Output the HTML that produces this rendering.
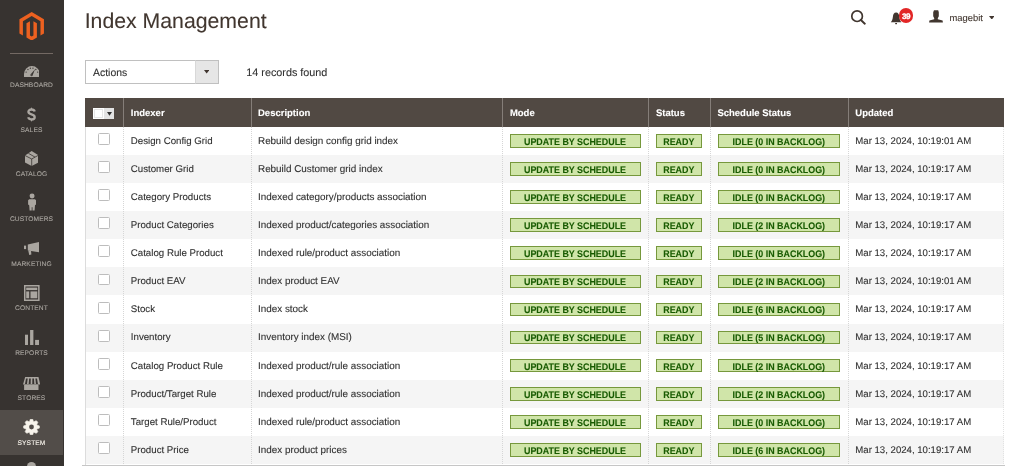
<!DOCTYPE html><html><head><meta charset="utf-8"><style>
*{margin:0;padding:0;box-sizing:border-box}
html,body{width:1024px;height:466px;overflow:hidden;background:#fff;font-family:"Liberation Sans",sans-serif}
body{will-change:transform;-webkit-text-stroke:0.1px;text-rendering:geometricPrecision}
.a{position:absolute}
.side{left:0;top:0;width:63.6px;height:466px;background:#373330}
.nl{position:absolute;left:0;width:63px;text-align:center;color:#aaa6a0;font-size:6.65px;line-height:8px;letter-spacing:0.1px;white-space:nowrap}
.ttl{left:84.7px;top:6.9px;font-size:21.25px;line-height:28px;color:#41362f;white-space:nowrap}
.tb{font-size:10.4px;line-height:14px;color:#303030;white-space:nowrap}
.th{position:absolute;top:98.4px;height:28.2px;background:#514943;color:#fff;font-weight:bold;font-size:9.5px;line-height:28.2px;white-space:nowrap;padding-left:7px;padding-top:1.2px}
.td{position:absolute;color:#303030;font-size:9.6px;white-space:nowrap;padding-left:7px;padding-top:1.2px}
.bd{position:absolute;height:13.6px;background:#d0e5a9;border:1px solid #76983c;color:#185b00;font-weight:bold;font-size:9.6px;line-height:11.6px;padding-top:1.7px;text-align:center;white-space:nowrap}
.bd span{display:inline-block;transform:scaleX(0.928);transform-origin:center}
</style></head><body>
<div class="a side">
<svg class="a" style="left:19px;top:11.8px" width="25.4" height="28.6" viewBox="0 0 24 28"><path fill="#ec6120" d="M12 0L0 7v14l3.4 2V9l8.6-5 8.6 5v14l3.4-2V7z"/><path fill="#ec6120" d="M13.7 23.1L12 24.1l-1.7-1V9L6.9 11v14L12 28l5.1-3V11l-3.4-2z"/></svg>
<div class="a" style="left:10px;top:53px;width:43px;height:1px;background:#736963"></div>
<div class="nl" style="top:81.9px;color:#aaa6a0">DASHBOARD</div>
<div class="nl" style="top:126.6px;color:#aaa6a0">SALES</div>
<div class="nl" style="top:171.3px;color:#aaa6a0">CATALOG</div>
<div class="nl" style="top:216px;color:#aaa6a0">CUSTOMERS</div>
<div class="nl" style="top:260.7px;color:#aaa6a0">MARKETING</div>
<div class="nl" style="top:305.4px;color:#aaa6a0">CONTENT</div>
<div class="nl" style="top:350.1px;color:#aaa6a0">REPORTS</div>
<div class="nl" style="top:394.8px;color:#aaa6a0">STORES</div>
<div class="a" style="left:0;top:409.9px;width:63px;height:44.8px;background:#524d49"></div>
<div class="nl" style="top:439.5px;color:#f7f3eb">SYSTEM</div>
<svg class="a" style="left:23.7px;top:65.7px" width="15.8" height="11.2" viewBox="0 0 16 11.2"><path fill="#aaa6a0" d="M0 11.2V8A8 8 0 0 1 16 8V11.2Z"/><circle cx="2.17" cy="6.08" r="0.7" fill="#3f3a37"/><circle cx="4.01" cy="3.45" r="0.7" fill="#3f3a37"/><circle cx="6.40" cy="2.21" r="0.7" fill="#3f3a37"/><circle cx="9.08" cy="2.09" r="0.7" fill="#3f3a37"/><circle cx="11.99" cy="3.45" r="0.7" fill="#3f3a37"/><circle cx="13.83" cy="6.08" r="0.7" fill="#3f3a37"/><path fill="#373330" d="M6.6 8.6L11.2 3.1L8.6 9.6Z"/><circle cx="7.6" cy="9.2" r="1.1" fill="#4a4541"/></svg>
<svg class="a" style="left:27px;top:106.8px" width="9" height="15" viewBox="0 0 9 15"><path fill="none" stroke="#aaa6a0" stroke-width="2.3" d="M7.7 4.5C7.3 3.2 6.1 2.5 4.5 2.5C2.7 2.5 1.4 3.4 1.4 4.8C1.4 6.4 2.9 7 4.5 7.4C6.3 7.9 7.7 8.5 7.7 10.2C7.7 11.7 6.3 12.5 4.5 12.5C2.8 12.5 1.6 11.7 1.2 10.3"/><path fill="#aaa6a0" d="M3.6 2.8L4.5 0L5.4 2.8ZM3.6 12.2L4.5 15L5.4 12.2Z"/></svg>
<svg class="a" style="left:24.7px;top:151px" width="13.4" height="15" viewBox="0 0 13.4 15"><path fill="#aaa6a0" d="M6.7 0L13.3 4.3V11.6L6.7 15L0 11.6V4.5Z"/><path stroke="#373330" stroke-width="0.8" fill="none" d="M0 4.5L6.7 8L13.3 4.3M6.7 8V15M3.4 2.3L10 6.1"/></svg>
<svg class="a" style="left:27.9px;top:193.3px" width="8.2" height="17.4" viewBox="0 0 8.2 17.4"><circle cx="4.1" cy="2.9" r="2.5" fill="#aaa6a0"/><path fill="#aaa6a0" d="M1.2 6.2H7L8.1 7.3V11.5L7 12.3L6.6 17.4H4.5V14.2H3.7V17.4H1.6L1.2 12.3L0.1 11.5V7.3Z"/></svg>
<svg class="a" style="left:23.9px;top:242.3px" width="15.4" height="13" viewBox="0 0 15.4 13"><path fill="#aaa6a0" d="M0 3.6H2.1V7.1H0Z"/><path fill="#aaa6a0" d="M3.8 2.6L15.4 0V10.3L3.8 8.6Z"/><path fill="#aaa6a0" d="M4.3 8.4H7L7.4 12.6L5.2 12.9Z"/></svg>
<svg class="a" style="left:24px;top:284.6px" width="15.6" height="16" viewBox="0 0 15.6 16"><rect x="0.75" y="0.75" width="14.1" height="14.5" fill="none" stroke="#aaa6a0" stroke-width="1.5"/><rect x="2.2" y="2.6" width="11.1" height="2.5" fill="#aaa6a0"/><rect x="2.2" y="6.4" width="3" height="6.9" fill="#aaa6a0"/><rect x="6.5" y="6.4" width="6.8" height="6.9" fill="#aaa6a0"/></svg>
<svg class="a" style="left:24.9px;top:330px" width="14.2" height="15" viewBox="0 0 14.2 15"><rect x="0" y="4.7" width="3" height="10.3" fill="#aaa6a0"/><rect x="5.1" y="0" width="3.3" height="15" fill="#aaa6a0"/><rect x="10.1" y="9.9" width="4" height="5.1" fill="#aaa6a0"/></svg>
<svg class="a" style="left:23px;top:376.5px" width="17.2" height="13.7" viewBox="0 0 17.2 13.7"><path fill="#aaa6a0" d="M2.2 0H15.5L17.2 7.6H0Z"/><path fill="#373330" d="M3.07 1.5H4.67L4.00 6.9H2.00Z"/><path fill="#373330" d="M6.16 1.5H7.76L7.66 6.9H5.66Z"/><path fill="#373330" d="M9.40 1.5H11.00L11.30 6.9H9.30Z"/><path fill="#373330" d="M12.40 1.5H14.00L14.95 6.9H12.95Z"/><rect x="1.1" y="7.6" width="14.4" height="6.1" fill="#aaa6a0"/></svg>
<svg class="a" style="left:23px;top:418.8px" width="17" height="16" viewBox="0 0 17 16"><path fill="#f7f3eb" stroke="#f7f3eb" stroke-width="0.6" stroke-linejoin="round" d="M6.52 2.55 L7.39 0.13 L9.61 0.13 L10.48 2.55 L10.95 2.74 L13.28 1.65 L14.85 3.22 L13.76 5.55 L13.95 6.02 L16.37 6.89 L16.37 9.11 L13.95 9.98 L13.76 10.45 L14.85 12.78 L13.28 14.35 L10.95 13.26 L10.48 13.45 L9.61 15.87 L7.39 15.87 L6.52 13.45 L6.05 13.26 L3.72 14.35 L2.15 12.78 L3.24 10.45 L3.05 9.98 L0.63 9.11 L0.63 6.89 L3.05 6.02 L3.24 5.55 L2.15 3.22 L3.72 1.65 L6.05 2.74Z"/><circle cx="8.5" cy="8.0" r="2.4" fill="#524d49"/></svg>
<div class="a" style="left:27.3px;top:462.4px;width:9px;height:9px;border-radius:50%;background:#aaa6a0"></div>
</div>
<div class="a ttl">Index Management</div>
<svg class="a" style="left:850px;top:9.5px" width="17" height="15" viewBox="0 0 17 15"><circle cx="7.1" cy="6.2" r="5.3" fill="none" stroke="#41362f" stroke-width="1.7"/><path d="M10.9 10L14.8 13.7" stroke="#41362f" stroke-width="1.9" stroke-linecap="round"/></svg>
<svg class="a" style="left:890px;top:11.5px" width="13" height="13" viewBox="0 0 13 13"><path fill="#41362f" d="M6.1 0.5C4 0.5 3.1 2.3 2.9 4.8C2.7 7.6 1.9 9.1 0.8 10.3H11.4C10.3 9.1 9.5 7.6 9.3 4.8C9.1 2.3 8.2 0.5 6.1 0.5Z"/><rect x="5.2" y="11" width="1.8" height="1.2" fill="#41362f"/></svg>
<div class="a" style="left:898.7px;top:8.2px;width:14.6px;height:14.6px;border-radius:50%;background:#e22626;color:#fff;font-weight:bold;font-size:8.1px;line-height:14.6px;padding-top:2.0px;-webkit-text-stroke:0.3px #fff;text-align:center;letter-spacing:-0.6px">39</div>
<svg class="a" style="left:929px;top:10px" width="14" height="13" viewBox="0 0 14 13"><path fill="#41362f" d="M5 0.3H9.2L9.8 2.2V6.2L8.8 8.3V9.3L13.6 10.6L13.9 12.6H0.1L0.4 10.6L5.2 9.3V8.3L4.2 6.2V2.2Z"/></svg>
<div class="a" style="left:949.5px;top:10.5px;font-size:9.4px;line-height:14px;color:#41362f;white-space:nowrap">magebit</div>
<svg class="a" style="left:988.6px;top:15.5px" width="5.6" height="3.6" viewBox="0 0 5.6 3.6"><path fill="#41362f" d="M0 0H5.6L2.8 3.6Z"/></svg>
<div class="a" style="left:85px;top:60px;width:134px;height:23.6px;border:1px solid #c0c0c0;background:#fff"></div>
<div class="a" style="left:194.6px;top:60px;width:24.4px;height:23.6px;border:1px solid #c0c0c0;border-left-color:#d8d8d8;background:#e6e6e6"></div>
<svg class="a" style="left:204.2px;top:70.4px" width="5.3" height="3.5" viewBox="0 0 5.3 3.5"><path fill="#41362f" d="M0 0H5.3L2.65 3.5Z"/></svg>
<div class="a tb" style="left:93.1px;top:67px">Actions</div>
<div class="a tb" style="left:246.3px;top:65.55px;font-size:10.8px">14 records found</div>
<div class="a" style="left:85.15px;top:98.4px;width:919.15px;height:28.2px;background:#514943"></div>
<div class="a" style="left:123.3px;top:98.4px;width:1px;height:28.2px;background:#857e79"></div>
<div class="th" style="left:123.8px;background:none">Indexer</div>
<div class="a" style="left:250.5px;top:98.4px;width:1px;height:28.2px;background:#857e79"></div>
<div class="th" style="left:251px;background:none">Description</div>
<div class="a" style="left:502.4px;top:98.4px;width:1px;height:28.2px;background:#857e79"></div>
<div class="th" style="left:502.9px;background:none">Mode</div>
<div class="a" style="left:648.4px;top:98.4px;width:1px;height:28.2px;background:#857e79"></div>
<div class="th" style="left:648.9px;background:none">Status</div>
<div class="a" style="left:709.9px;top:98.4px;width:1px;height:28.2px;background:#857e79"></div>
<div class="th" style="left:710.4px;background:none">Schedule Status</div>
<div class="a" style="left:847.8px;top:98.4px;width:1px;height:28.2px;background:#857e79"></div>
<div class="th" style="left:848.3px;background:none">Updated</div>
<div class="a" style="left:92.95px;top:107.7px;width:21.25px;height:11.05px;background:#e3e3e3"></div>
<div class="a" style="left:92.95px;top:107.7px;width:11.1px;height:11.05px;background:#fff"></div>
<div class="a" style="left:94.1px;top:108.8px;width:8.9px;height:8.9px;border:1px solid #e6e6e6"></div>
<svg class="a" style="left:106.9px;top:112px" width="5" height="3.7" viewBox="0 0 5 3.7"><path fill="#303030" d="M0 0H5L2.5 3.7Z"/></svg>
<div class="a" style="left:85.15px;top:126.6px;width:919.15px;height:28.15px;background:#fff"></div>
<div class="a" style="left:98.3px;top:133.1px;width:11.8px;height:11.9px;border:1px solid #bdbdbd;border-radius:1.5px;background:#fff"></div>
<div class="td" style="left:123.8px;top:126.6px;height:28.15px;line-height:28.15px;font-size:9.7px">Design Config Grid</div>
<div class="td" style="left:251px;top:126.6px;height:28.15px;line-height:28.15px;font-size:9.88px">Rebuild design config grid index</div>
<div class="td" style="left:848.3px;top:126.6px;height:28.15px;line-height:28.15px;font-size:9.62px">Mar 13, 2024, 10:19:01 AM</div>
<div class="bd" style="left:510.1px;top:134.1px;width:130.6px"><span>UPDATE BY SCHEDULE</span></div>
<div class="bd" style="left:656.1px;top:134.1px;width:46.1px"><span>READY</span></div>
<div class="bd" style="left:717.6px;top:134.1px;width:122.5px"><span>IDLE (0 IN BACKLOG)</span></div>
<div class="a" style="left:85.15px;top:154.75px;width:919.15px;height:28.15px;background:#f5f5f5"></div>
<div class="a" style="left:98.3px;top:161.19px;width:11.8px;height:11.9px;border:1px solid #bdbdbd;border-radius:1.5px;background:#fff"></div>
<div class="td" style="left:123.8px;top:154.69px;height:28.15px;line-height:28.15px;font-size:9.7px">Customer Grid</div>
<div class="td" style="left:251px;top:154.69px;height:28.15px;line-height:28.15px;font-size:9.88px">Rebuild Customer grid index</div>
<div class="td" style="left:848.3px;top:154.69px;height:28.15px;line-height:28.15px;font-size:9.62px">Mar 13, 2024, 10:19:17 AM</div>
<div class="bd" style="left:510.1px;top:162.19px;width:130.6px"><span>UPDATE BY SCHEDULE</span></div>
<div class="bd" style="left:656.1px;top:162.19px;width:46.1px"><span>READY</span></div>
<div class="bd" style="left:717.6px;top:162.19px;width:122.5px"><span>IDLE (0 IN BACKLOG)</span></div>
<div class="a" style="left:85.15px;top:182.9px;width:919.15px;height:28.15px;background:#fff"></div>
<div class="a" style="left:98.3px;top:189.28px;width:11.8px;height:11.9px;border:1px solid #bdbdbd;border-radius:1.5px;background:#fff"></div>
<div class="td" style="left:123.8px;top:182.78px;height:28.15px;line-height:28.15px;font-size:9.7px">Category Products</div>
<div class="td" style="left:251px;top:182.78px;height:28.15px;line-height:28.15px;font-size:9.88px">Indexed category/products association</div>
<div class="td" style="left:848.3px;top:182.78px;height:28.15px;line-height:28.15px;font-size:9.62px">Mar 13, 2024, 10:19:17 AM</div>
<div class="bd" style="left:510.1px;top:190.28px;width:130.6px"><span>UPDATE BY SCHEDULE</span></div>
<div class="bd" style="left:656.1px;top:190.28px;width:46.1px"><span>READY</span></div>
<div class="bd" style="left:717.6px;top:190.28px;width:122.5px"><span>IDLE (0 IN BACKLOG)</span></div>
<div class="a" style="left:85.15px;top:211.05px;width:919.15px;height:28.15px;background:#f5f5f5"></div>
<div class="a" style="left:98.3px;top:217.37px;width:11.8px;height:11.9px;border:1px solid #bdbdbd;border-radius:1.5px;background:#fff"></div>
<div class="td" style="left:123.8px;top:210.87px;height:28.15px;line-height:28.15px;font-size:9.7px">Product Categories</div>
<div class="td" style="left:251px;top:210.87px;height:28.15px;line-height:28.15px;font-size:9.88px">Indexed product/categories association</div>
<div class="td" style="left:848.3px;top:210.87px;height:28.15px;line-height:28.15px;font-size:9.62px">Mar 13, 2024, 10:19:17 AM</div>
<div class="bd" style="left:510.1px;top:218.37px;width:130.6px"><span>UPDATE BY SCHEDULE</span></div>
<div class="bd" style="left:656.1px;top:218.37px;width:46.1px"><span>READY</span></div>
<div class="bd" style="left:717.6px;top:218.37px;width:122.5px"><span>IDLE (2 IN BACKLOG)</span></div>
<div class="a" style="left:85.15px;top:239.2px;width:919.15px;height:28.15px;background:#fff"></div>
<div class="a" style="left:98.3px;top:245.46px;width:11.8px;height:11.9px;border:1px solid #bdbdbd;border-radius:1.5px;background:#fff"></div>
<div class="td" style="left:123.8px;top:238.96px;height:28.15px;line-height:28.15px;font-size:9.7px">Catalog Rule Product</div>
<div class="td" style="left:251px;top:238.96px;height:28.15px;line-height:28.15px;font-size:9.88px">Indexed rule/product association</div>
<div class="td" style="left:848.3px;top:238.96px;height:28.15px;line-height:28.15px;font-size:9.62px">Mar 13, 2024, 10:19:17 AM</div>
<div class="bd" style="left:510.1px;top:246.46px;width:130.6px"><span>UPDATE BY SCHEDULE</span></div>
<div class="bd" style="left:656.1px;top:246.46px;width:46.1px"><span>READY</span></div>
<div class="bd" style="left:717.6px;top:246.46px;width:122.5px"><span>IDLE (0 IN BACKLOG)</span></div>
<div class="a" style="left:85.15px;top:267.35px;width:919.15px;height:28.15px;background:#f5f5f5"></div>
<div class="a" style="left:98.3px;top:273.55px;width:11.8px;height:11.9px;border:1px solid #bdbdbd;border-radius:1.5px;background:#fff"></div>
<div class="td" style="left:123.8px;top:267.05px;height:28.15px;line-height:28.15px;font-size:9.7px">Product EAV</div>
<div class="td" style="left:251px;top:267.05px;height:28.15px;line-height:28.15px;font-size:9.88px">Index product EAV</div>
<div class="td" style="left:848.3px;top:267.05px;height:28.15px;line-height:28.15px;font-size:9.62px">Mar 13, 2024, 10:19:01 AM</div>
<div class="bd" style="left:510.1px;top:274.55px;width:130.6px"><span>UPDATE BY SCHEDULE</span></div>
<div class="bd" style="left:656.1px;top:274.55px;width:46.1px"><span>READY</span></div>
<div class="bd" style="left:717.6px;top:274.55px;width:122.5px"><span>IDLE (2 IN BACKLOG)</span></div>
<div class="a" style="left:85.15px;top:295.5px;width:919.15px;height:28.15px;background:#fff"></div>
<div class="a" style="left:98.3px;top:301.64px;width:11.8px;height:11.9px;border:1px solid #bdbdbd;border-radius:1.5px;background:#fff"></div>
<div class="td" style="left:123.8px;top:295.14px;height:28.15px;line-height:28.15px;font-size:9.7px">Stock</div>
<div class="td" style="left:251px;top:295.14px;height:28.15px;line-height:28.15px;font-size:9.88px">Index stock</div>
<div class="td" style="left:848.3px;top:295.14px;height:28.15px;line-height:28.15px;font-size:9.62px">Mar 13, 2024, 10:19:17 AM</div>
<div class="bd" style="left:510.1px;top:302.64px;width:130.6px"><span>UPDATE BY SCHEDULE</span></div>
<div class="bd" style="left:656.1px;top:302.64px;width:46.1px"><span>READY</span></div>
<div class="bd" style="left:717.6px;top:302.64px;width:122.5px"><span>IDLE (6 IN BACKLOG)</span></div>
<div class="a" style="left:85.15px;top:323.65px;width:919.15px;height:28.15px;background:#f5f5f5"></div>
<div class="a" style="left:98.3px;top:329.73px;width:11.8px;height:11.9px;border:1px solid #bdbdbd;border-radius:1.5px;background:#fff"></div>
<div class="td" style="left:123.8px;top:323.23px;height:28.15px;line-height:28.15px;font-size:9.7px">Inventory</div>
<div class="td" style="left:251px;top:323.23px;height:28.15px;line-height:28.15px;font-size:9.88px">Inventory index (MSI)</div>
<div class="td" style="left:848.3px;top:323.23px;height:28.15px;line-height:28.15px;font-size:9.62px">Mar 13, 2024, 10:19:17 AM</div>
<div class="bd" style="left:510.1px;top:330.73px;width:130.6px"><span>UPDATE BY SCHEDULE</span></div>
<div class="bd" style="left:656.1px;top:330.73px;width:46.1px"><span>READY</span></div>
<div class="bd" style="left:717.6px;top:330.73px;width:122.5px"><span>IDLE (5 IN BACKLOG)</span></div>
<div class="a" style="left:85.15px;top:351.8px;width:919.15px;height:28.15px;background:#fff"></div>
<div class="a" style="left:98.3px;top:357.82px;width:11.8px;height:11.9px;border:1px solid #bdbdbd;border-radius:1.5px;background:#fff"></div>
<div class="td" style="left:123.8px;top:351.32px;height:28.15px;line-height:28.15px;font-size:9.7px">Catalog Product Rule</div>
<div class="td" style="left:251px;top:351.32px;height:28.15px;line-height:28.15px;font-size:9.88px">Indexed product/rule association</div>
<div class="td" style="left:848.3px;top:351.32px;height:28.15px;line-height:28.15px;font-size:9.62px">Mar 13, 2024, 10:19:17 AM</div>
<div class="bd" style="left:510.1px;top:358.82px;width:130.6px"><span>UPDATE BY SCHEDULE</span></div>
<div class="bd" style="left:656.1px;top:358.82px;width:46.1px"><span>READY</span></div>
<div class="bd" style="left:717.6px;top:358.82px;width:122.5px"><span>IDLE (2 IN BACKLOG)</span></div>
<div class="a" style="left:85.15px;top:379.95px;width:919.15px;height:28.15px;background:#f5f5f5"></div>
<div class="a" style="left:98.3px;top:385.91px;width:11.8px;height:11.9px;border:1px solid #bdbdbd;border-radius:1.5px;background:#fff"></div>
<div class="td" style="left:123.8px;top:379.41px;height:28.15px;line-height:28.15px;font-size:9.7px">Product/Target Rule</div>
<div class="td" style="left:251px;top:379.41px;height:28.15px;line-height:28.15px;font-size:9.88px">Indexed product/rule association</div>
<div class="td" style="left:848.3px;top:379.41px;height:28.15px;line-height:28.15px;font-size:9.62px">Mar 13, 2024, 10:19:17 AM</div>
<div class="bd" style="left:510.1px;top:386.91px;width:130.6px"><span>UPDATE BY SCHEDULE</span></div>
<div class="bd" style="left:656.1px;top:386.91px;width:46.1px"><span>READY</span></div>
<div class="bd" style="left:717.6px;top:386.91px;width:122.5px"><span>IDLE (2 IN BACKLOG)</span></div>
<div class="a" style="left:85.15px;top:408.1px;width:919.15px;height:28.15px;background:#fff"></div>
<div class="a" style="left:98.3px;top:414px;width:11.8px;height:11.9px;border:1px solid #bdbdbd;border-radius:1.5px;background:#fff"></div>
<div class="td" style="left:123.8px;top:407.5px;height:28.15px;line-height:28.15px;font-size:9.7px">Target Rule/Product</div>
<div class="td" style="left:251px;top:407.5px;height:28.15px;line-height:28.15px;font-size:9.88px">Indexed rule/product association</div>
<div class="td" style="left:848.3px;top:407.5px;height:28.15px;line-height:28.15px;font-size:9.62px">Mar 13, 2024, 10:19:17 AM</div>
<div class="bd" style="left:510.1px;top:415px;width:130.6px"><span>UPDATE BY SCHEDULE</span></div>
<div class="bd" style="left:656.1px;top:415px;width:46.1px"><span>READY</span></div>
<div class="bd" style="left:717.6px;top:415px;width:122.5px"><span>IDLE (0 IN BACKLOG)</span></div>
<div class="a" style="left:85.15px;top:436.25px;width:919.15px;height:28.15px;background:#f5f5f5"></div>
<div class="a" style="left:98.3px;top:442.09px;width:11.8px;height:11.9px;border:1px solid #bdbdbd;border-radius:1.5px;background:#fff"></div>
<div class="td" style="left:123.8px;top:435.59px;height:28.15px;line-height:28.15px;font-size:9.7px">Product Price</div>
<div class="td" style="left:251px;top:435.59px;height:28.15px;line-height:28.15px;font-size:9.88px">Index product prices</div>
<div class="td" style="left:848.3px;top:435.59px;height:28.15px;line-height:28.15px;font-size:9.62px">Mar 13, 2024, 10:19:17 AM</div>
<div class="bd" style="left:510.1px;top:443.09px;width:130.6px"><span>UPDATE BY SCHEDULE</span></div>
<div class="bd" style="left:656.1px;top:443.09px;width:46.1px"><span>READY</span></div>
<div class="bd" style="left:717.6px;top:443.09px;width:122.5px"><span>IDLE (6 IN BACKLOG)</span></div>
<div class="a" style="left:85.15px;top:464.4px;width:919.15px;height:28.15px;background:#fff"></div>
<div class="a" style="left:98.3px;top:470.18px;width:11.8px;height:11.9px;border:1px solid #bdbdbd;border-radius:1.5px;background:#fff"></div>
<div class="td" style="left:123.8px;top:463.68px;height:28.15px;line-height:28.15px;font-size:9.7px">Extra</div>
<div class="td" style="left:251px;top:463.68px;height:28.15px;line-height:28.15px;font-size:9.88px">Extra</div>
<div class="td" style="left:848.3px;top:463.68px;height:28.15px;line-height:28.15px;font-size:9.62px">Mar 13, 2024, 10:19:17 AM</div>
<div class="bd" style="left:510.1px;top:471.18px;width:130.6px"><span>UPDATE BY SCHEDULE</span></div>
<div class="bd" style="left:656.1px;top:471.18px;width:46.1px"><span>READY</span></div>
<div class="bd" style="left:717.6px;top:471.18px;width:122.5px"><span>IDLE (0 IN BACKLOG)</span></div>
<div class="a" style="left:85.15px;top:126.6px;width:1px;height:339.4px;background:#dcdcdc"></div>
<div class="a" style="left:123.3px;top:126.6px;width:0;height:339.4px;border-left:1px dotted #d6d6d6"></div>
<div class="a" style="left:250.5px;top:126.6px;width:0;height:339.4px;border-left:1px dotted #d6d6d6"></div>
<div class="a" style="left:502.4px;top:126.6px;width:0;height:339.4px;border-left:1px dotted #d6d6d6"></div>
<div class="a" style="left:648.4px;top:126.6px;width:0;height:339.4px;border-left:1px dotted #d6d6d6"></div>
<div class="a" style="left:709.9px;top:126.6px;width:0;height:339.4px;border-left:1px dotted #d6d6d6"></div>
<div class="a" style="left:847.8px;top:126.6px;width:0;height:339.4px;border-left:1px dotted #d6d6d6"></div>
<div class="a" style="left:1003.3px;top:126.6px;width:0;height:339.4px;border-left:1px dotted #e2e2e2"></div>
<div class="a" style="left:82px;top:465px;width:922.6px;height:1px;background:#c6c6c6"></div>
</body></html>
